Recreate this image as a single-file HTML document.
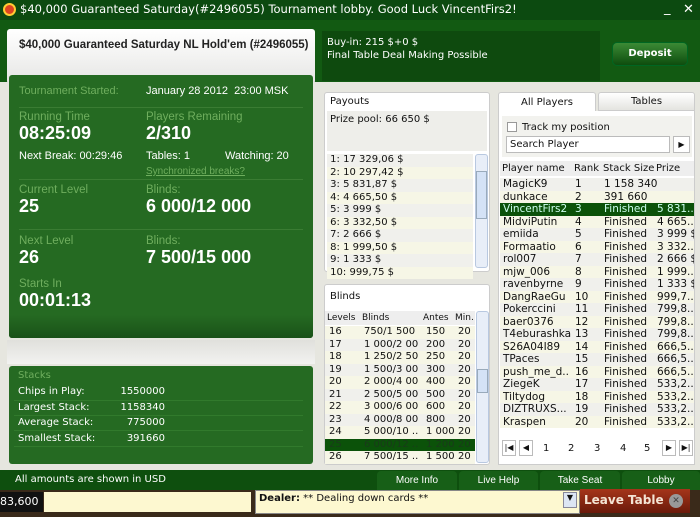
<!DOCTYPE html>
<html><head><style>
*{margin:0;padding:0;box-sizing:border-box}
body{width:700px;height:517px;overflow:hidden;background:#e6e6df;font-family:"DejaVu Sans","Liberation Sans",sans-serif;font-size:10px;position:relative;color:#111}
.a{position:absolute}
.l{font-family:"Liberation Sans",sans-serif}
.g{color:#6fae5e}
.w{color:#fff}
.row{position:absolute;left:0;right:0;height:12.5px;line-height:12.5px;white-space:nowrap}
.sep{position:absolute;left:10px;right:10px;height:1px;background:#3a7c33}
</style></head><body>
<!-- title -->
<div class="a" style="left:0;top:0;width:700px;height:20px;background:#0c4a10;color:#fff;font-size:11.5px;line-height:19px;padding-left:20px">$40,000 Guaranteed Saturday(#2496055) Tournament lobby. Good Luck VincentFirs2!</div>
<div class="a" style="left:3px;top:3px;width:13px;height:13px;border-radius:50%;background:#d42;border:2px solid #fc3"></div>
<div class="a w" style="left:664px;top:1px;font-size:13px">_</div><div class="a w" style="left:683px;top:2px;font-size:13px">✕</div>
<div class="a" style="left:0;top:20px;width:700px;height:62px;background:#125a12"></div>
<div class="a" style="left:7px;top:29px;width:308px;height:55px;background:linear-gradient(#fff,#e6e6e4);border-radius:3px"></div>
<div class="a l" style="left:19px;top:39px;font-size:11.5px;font-weight:bold;color:#222">$40,000 Guaranteed Saturday NL Hold'em (#2496055)</div>
<div class="a" style="left:322px;top:31px;width:278px;height:50px;background:#0e4a0e"></div>
<div class="a w" style="left:327px;top:36px;line-height:13px">Buy-in: 215 $+0 $<br>Final Table Deal Making Possible</div>
<div class="a" style="left:612px;top:42px;width:76px;height:24px;border-radius:5px;background:linear-gradient(#3b8a35,#0e4d0e);border:1px solid #062;color:#fff;font-weight:bold;text-align:center;line-height:22px">Deposit</div>
<!-- left green panel -->
<div class="a l" style="left:9px;top:75px;width:304px;height:263px;background:#256a22;border-radius:3px">
 <div class="a g" style="left:10px;top:10px;font-size:11px">Tournament Started:</div>
 <div class="a w" style="left:137px;top:10px;font-size:11px">January 28 2012&nbsp; 23:00 MSK</div>
 <div class="sep" style="top:32px"></div>
 <div class="a g" style="left:10px;top:36px;font-size:11.5px">Running Time</div>
 <div class="a g" style="left:137px;top:36px;font-size:11.5px">Players Remaining</div>
 <div class="a w" style="left:10px;top:48px;font-size:18px;font-weight:bold">08:25:09</div>
 <div class="a w" style="left:137px;top:48px;font-size:18px;font-weight:bold">2/310</div>
 <div class="a w" style="left:10px;top:75px;font-size:11px">Next Break: 00:29:46</div>
 <div class="a w" style="left:137px;top:75px;font-size:11px">Tables: 1</div>
 <div class="a w" style="left:216px;top:75px;font-size:11px">Watching: 20</div>
 <div class="a g" style="left:137px;top:91px;font-size:10px;text-decoration:underline">Synchronized breaks?</div>
 <div class="sep" style="top:104px"></div>
 <div class="a g" style="left:10px;top:109px;font-size:11.5px">Current Level</div>
 <div class="a g" style="left:137px;top:109px;font-size:11.5px">Blinds:</div>
 <div class="a w" style="left:10px;top:121px;font-size:18px;font-weight:bold">25</div>
 <div class="a w" style="left:137px;top:121px;font-size:18px;font-weight:bold">6 000/12 000</div>
 <div class="sep" style="top:154px"></div>
 <div class="a g" style="left:10px;top:160px;font-size:11.5px">Next Level</div>
 <div class="a g" style="left:137px;top:160px;font-size:11.5px">Blinds:</div>
 <div class="a w" style="left:10px;top:172px;font-size:18px;font-weight:bold">26</div>
 <div class="a w" style="left:137px;top:172px;font-size:18px;font-weight:bold">7 500/15 000</div>
 <div class="a g" style="left:10px;top:203px;font-size:11.5px">Starts In</div>
 <div class="a w" style="left:10px;top:215px;font-size:18px;font-weight:bold">00:01:13</div>
 <div class="a" style="left:0;top:240px;width:304px;height:23px;background:linear-gradient(#256a22,#1a5218);border-radius:0 0 3px 3px"></div>
</div>
<div class="a" style="left:7px;top:340px;width:308px;height:24px;background:linear-gradient(#e0e0dc,#f2f2f0)"></div>
<!-- stacks -->
<div class="a" style="left:9px;top:366px;width:304px;height:98px;background:#256a22;border-radius:3px">
 <div class="a g" style="left:9px;top:4px">Stacks</div>
 <div class="a w" style="left:9px;top:20px">Chips in Play:</div><div class="a w" style="left:104px;top:20px;width:52px;text-align:right">1550000</div>
 <div class="a w" style="left:9px;top:36px">Largest Stack:</div><div class="a w" style="left:104px;top:36px;width:52px;text-align:right">1158340</div>
 <div class="a w" style="left:9px;top:51px">Average Stack:</div><div class="a w" style="left:104px;top:51px;width:52px;text-align:right">775000</div>
 <div class="a w" style="left:9px;top:67px">Smallest Stack:</div><div class="a w" style="left:104px;top:67px;width:52px;text-align:right">391660</div>
 <div class="sep" style="top:34px;left:5px;right:10px;background:#317a2c"></div><div class="sep" style="top:49px;left:5px;right:10px;background:#317a2c"></div><div class="sep" style="top:64px;left:5px;right:10px;background:#317a2c"></div><div class="sep" style="top:80px;left:5px;right:10px;background:#317a2c"></div>
</div>
<!-- payouts -->
<div class="a" style="left:324px;top:92px;width:166px;height:180px;background:#fff;border:1px solid #ccc;border-radius:3px">
 <div class="a" style="left:5px;top:3px">Payouts</div>
 <div class="a" style="left:2px;top:18px;width:160px;height:40px;background:#eeeeea;padding:3px 3px">Prize pool: 66 650 $</div>
 <div class="a" style="left:2px;top:61px;width:146px;height:116px;font-size:10px">
  <div class="row" style="top:0;background:#f0f0ec">&nbsp;1: 17 329,06 $</div>
  <div class="row" style="top:12.5px;background:#f6f6e6">&nbsp;2: 10 297,42 $</div>
  <div class="row" style="top:25px;background:#f0f0ec">&nbsp;3: 5 831,87 $</div>
  <div class="row" style="top:37.5px;background:#f6f6e6">&nbsp;4: 4 665,50 $</div>
  <div class="row" style="top:50px;background:#f0f0ec">&nbsp;5: 3 999 $</div>
  <div class="row" style="top:62.5px;background:#f6f6e6">&nbsp;6: 3 332,50 $</div>
  <div class="row" style="top:75px;background:#f0f0ec">&nbsp;7: 2 666 $</div>
  <div class="row" style="top:87.5px;background:#f6f6e6">&nbsp;8: 1 999,50 $</div>
  <div class="row" style="top:100px;background:#f0f0ec">&nbsp;9: 1 333 $</div>
  <div class="row" style="top:112.5px;background:#f6f6e6">&nbsp;10: 999,75 $</div>
 </div>
 <div class="a" style="left:150px;top:61px;width:13px;height:114px;background:#e8eef8;border:1px solid #b8c8e0;border-radius:3px"></div>
 <div class="a" style="left:151px;top:78px;width:11px;height:48px;background:#d4e2f6;border:1px solid #9ab"></div>
</div>
<!-- blinds -->
<div class="a" style="left:324px;top:284px;width:166px;height:181px;background:#fff;border:1px solid #ccc;border-radius:3px">
 <div class="a" style="left:5px;top:6px">Blinds</div>
 <div class="a" style="left:0;top:26px;width:150px;height:14px;background:#eee;font-size:9px;line-height:14px">
  <span class="a" style="left:2px">Levels</span><span class="a" style="left:37px">Blinds</span><span class="a" style="left:98px">Antes</span><span class="a" style="left:130px">Min.</span></div>
 <div class="a" style="left:0;top:41px;width:150px;height:138px;font-size:10px">
  <div class="row" style="top:0;background:#f6f6e6"><span class="a" style="left:4px">16</span><span class="a" style="left:39px">750/1 500</span><span class="a" style="left:101px">150</span><span class="a" style="left:133px">20</span></div>
  <div class="row" style="top:12.5px;background:#f0f0ec"><span class="a" style="left:4px">17</span><span class="a" style="left:39px">1 000/2 00</span><span class="a" style="left:101px">200</span><span class="a" style="left:133px">20</span></div>
  <div class="row" style="top:25px;background:#f6f6e6"><span class="a" style="left:4px">18</span><span class="a" style="left:39px">1 250/2 50</span><span class="a" style="left:101px">250</span><span class="a" style="left:133px">20</span></div>
  <div class="row" style="top:37.5px;background:#f0f0ec"><span class="a" style="left:4px">19</span><span class="a" style="left:39px">1 500/3 00</span><span class="a" style="left:101px">300</span><span class="a" style="left:133px">20</span></div>
  <div class="row" style="top:50px;background:#f6f6e6"><span class="a" style="left:4px">20</span><span class="a" style="left:39px">2 000/4 00</span><span class="a" style="left:101px">400</span><span class="a" style="left:133px">20</span></div>
  <div class="row" style="top:62.5px;background:#f0f0ec"><span class="a" style="left:4px">21</span><span class="a" style="left:39px">2 500/5 00</span><span class="a" style="left:101px">500</span><span class="a" style="left:133px">20</span></div>
  <div class="row" style="top:75px;background:#f6f6e6"><span class="a" style="left:4px">22</span><span class="a" style="left:39px">3 000/6 00</span><span class="a" style="left:101px">600</span><span class="a" style="left:133px">20</span></div>
  <div class="row" style="top:87.5px;background:#f0f0ec"><span class="a" style="left:4px">23</span><span class="a" style="left:39px">4 000/8 00</span><span class="a" style="left:101px">800</span><span class="a" style="left:133px">20</span></div>
  <div class="row" style="top:100px;background:#f6f6e6"><span class="a" style="left:4px">24</span><span class="a" style="left:39px">5 000/10 ..</span><span class="a" style="left:101px">1 000</span><span class="a" style="left:133px">20</span></div>
  <div class="row" style="top:112.5px;background:#0b5209;color:#1a3a1a"><span class="a" style="left:4px">25</span><span class="a" style="left:39px">6 000/12 ..</span><span class="a" style="left:101px">1 200</span><span class="a" style="left:133px">20</span></div>
  <div class="row" style="top:125px;background:#f6f6e6"><span class="a" style="left:4px">26</span><span class="a" style="left:39px">7 500/15 ..</span><span class="a" style="left:101px">1 500</span><span class="a" style="left:133px">20</span></div>
 </div>
 <div class="a" style="left:151px;top:26px;width:13px;height:152px;background:#e8eef8;border:1px solid #b8c8e0;border-radius:3px"></div>
 <div class="a" style="left:152px;top:84px;width:11px;height:24px;background:#d4e2f6;border:1px solid #9ab"></div>
</div>
<!-- players -->
<div class="a" style="left:498px;top:92px;width:98px;height:20px;background:#fff;border:1px solid #ccc;border-bottom:none;border-radius:3px 3px 0 0;text-align:center;line-height:19px">All Players</div>
<div class="a" style="left:598px;top:92px;width:97px;height:19px;background:linear-gradient(#fff,#e4e4e0);border:1px solid #ccc;border-radius:3px 3px 0 0;text-align:center;line-height:18px">Tables</div>
<div class="a" style="left:498px;top:111px;width:197px;height:354px;background:#fff;border:1px solid #ccc;border-top:none">
 <div class="a" style="left:3px;top:5px;width:190px;height:41px;background:#f2f2ee"></div>
 <div class="a" style="left:8px;top:11px;width:10px;height:10px;border:1px solid #999;background:#fff"></div>
 <div class="a" style="left:23px;top:11px">Track my position</div>
 <div class="a" style="left:7px;top:25px;width:164px;height:17px;border:1px solid #bbb;background:#fff;padding:2px 3px">Search Player</div>
 <div class="a" style="left:174px;top:25px;width:17px;height:17px;border:1px solid #bbb;background:#fff;font-size:8px;text-align:center;line-height:15px">▶</div>
 <div class="a" style="left:1px;top:50px;width:194px;height:15px;background:#eee;line-height:15px">
  <span class="a" style="left:2px">Player name</span><span class="a" style="left:74px">Rank</span><span class="a" style="left:103px">Stack Size</span><span class="a" style="left:156px">Prize</span></div>
 <div class="a" style="left:1px;top:67px;width:194px;height:255px;overflow:hidden;font-size:10.5px">
 <script>
 var d=[["MagicK9","1","1 158 340",""],["dunkace","2","391 660",""],["VincentFirs2","3","Finished","5 831.."],["MidviPutin","4","Finished","4 665.."],["emiida","5","Finished","3 999 $"],["Formaatio","6","Finished","3 332.."],["rol007","7","Finished","2 666 $"],["mjw_006","8","Finished","1 999.."],["ravenbyrne","9","Finished","1 333 $"],["DangRaeGu","10","Finished","999,7.."],["Pokerccini","11","Finished","799,8.."],["baer0376","12","Finished","799,8.."],["T4eburashka","13","Finished","799,8.."],["S26A04I89","14","Finished","666,5.."],["TPaces","15","Finished","666,5.."],["push_me_d..","16","Finished","666,5.."],["ZiegeK","17","Finished","533,2.."],["Tiltydog","18","Finished","533,2.."],["DIZTRUXS...","19","Finished","533,2.."],["Kraspen","20","Finished","533,2.."]];
 for(var i=0;i<d.length;i++){var s=i==2?"background:#0b5209;color:#cfe":(i%2?"background:#f6f6e6":"background:#f0f0ec");
 document.write('<div class="row" style="top:'+(i*12.5)+'px;'+s+'"><span class="a" style="left:3px">'+d[i][0]+'</span><span class="a" style="left:75px">'+d[i][1]+'</span><span class="a" style="left:104px">'+d[i][2]+'</span><span class="a" style="left:157px">'+d[i][3]+'</span></div>');}
 </script>
 </div>
 <div class="a" style="left:3px;top:329px;width:14px;height:16px;border:1px solid #bbb;font-size:8px;text-align:center;line-height:14px">|◀</div>
 <div class="a" style="left:20px;top:329px;width:14px;height:16px;border:1px solid #bbb;font-size:8px;text-align:center;line-height:14px">◀</div>
 <div class="a" style="left:44px;top:332px">1</div><div class="a" style="left:69px;top:332px">2</div><div class="a" style="left:95px;top:332px">3</div><div class="a" style="left:121px;top:332px">4</div><div class="a" style="left:145px;top:332px">5</div>
 <div class="a" style="left:163px;top:329px;width:14px;height:16px;border:1px solid #bbb;font-size:8px;text-align:center;line-height:14px">▶</div>
 <div class="a" style="left:180px;top:329px;width:14px;height:16px;border:1px solid #bbb;font-size:8px;text-align:center;line-height:14px">▶|</div>
</div>
<!-- footer -->
<div class="a" style="left:0;top:470px;width:700px;height:20px;background:#0e4f0e"></div>
<div class="a w" style="left:15px;top:474px">All amounts are shown in USD</div>
<div class="a w l" style="left:377px;top:471px;width:80px;height:19px;background:#175f17;border-radius:4px 4px 0 0;text-align:center;line-height:19px">More Info</div>
<div class="a w l" style="left:459px;top:471px;width:79px;height:19px;background:#175f17;border-radius:4px 4px 0 0;text-align:center;line-height:19px">Live Help</div>
<div class="a w l" style="left:540px;top:471px;width:80px;height:19px;background:#175f17;border-radius:4px 4px 0 0;text-align:center;line-height:19px">Take Seat</div>
<div class="a w l" style="left:622px;top:471px;width:78px;height:19px;background:#175f17;border-radius:4px 4px 0 0;text-align:center;line-height:19px">Lobby</div>
<!-- bottom -->
<div class="a" style="left:0;top:490px;width:700px;height:27px;background:#3a2a1a"></div>
<div class="a" style="left:0;top:492px;width:43px;height:20px;background:#111;color:#fff;font-size:11px;line-height:20px">83,600</div>
<div class="a" style="left:44px;top:492px;width:207px;height:20px;background:#fdf8d0"></div>
<div class="a" style="left:255px;top:490px;width:325px;height:24px;background:#fdf8d0;border:1px solid #888;padding:2px 3px;font-size:10px"><b>Dealer:</b> ** Dealing down cards **</div>
<div class="a" style="left:563px;top:492px;width:14px;height:16px;background:#dde6f4;border:1px solid #889;font-size:8px;text-align:center">▼</div>
<div class="a" style="left:580px;top:489px;width:110px;height:24px;background:linear-gradient(#a5351a,#6a1a0a);color:#f4e4d4;font-weight:bold;font-size:12px;line-height:22px;padding-left:4px">Leave Table</div>
<div class="a" style="left:669px;top:494px;width:14px;height:14px;border-radius:50%;background:#999;color:#444;font-size:9px;text-align:center;line-height:14px">✕</div>
</body></html>
